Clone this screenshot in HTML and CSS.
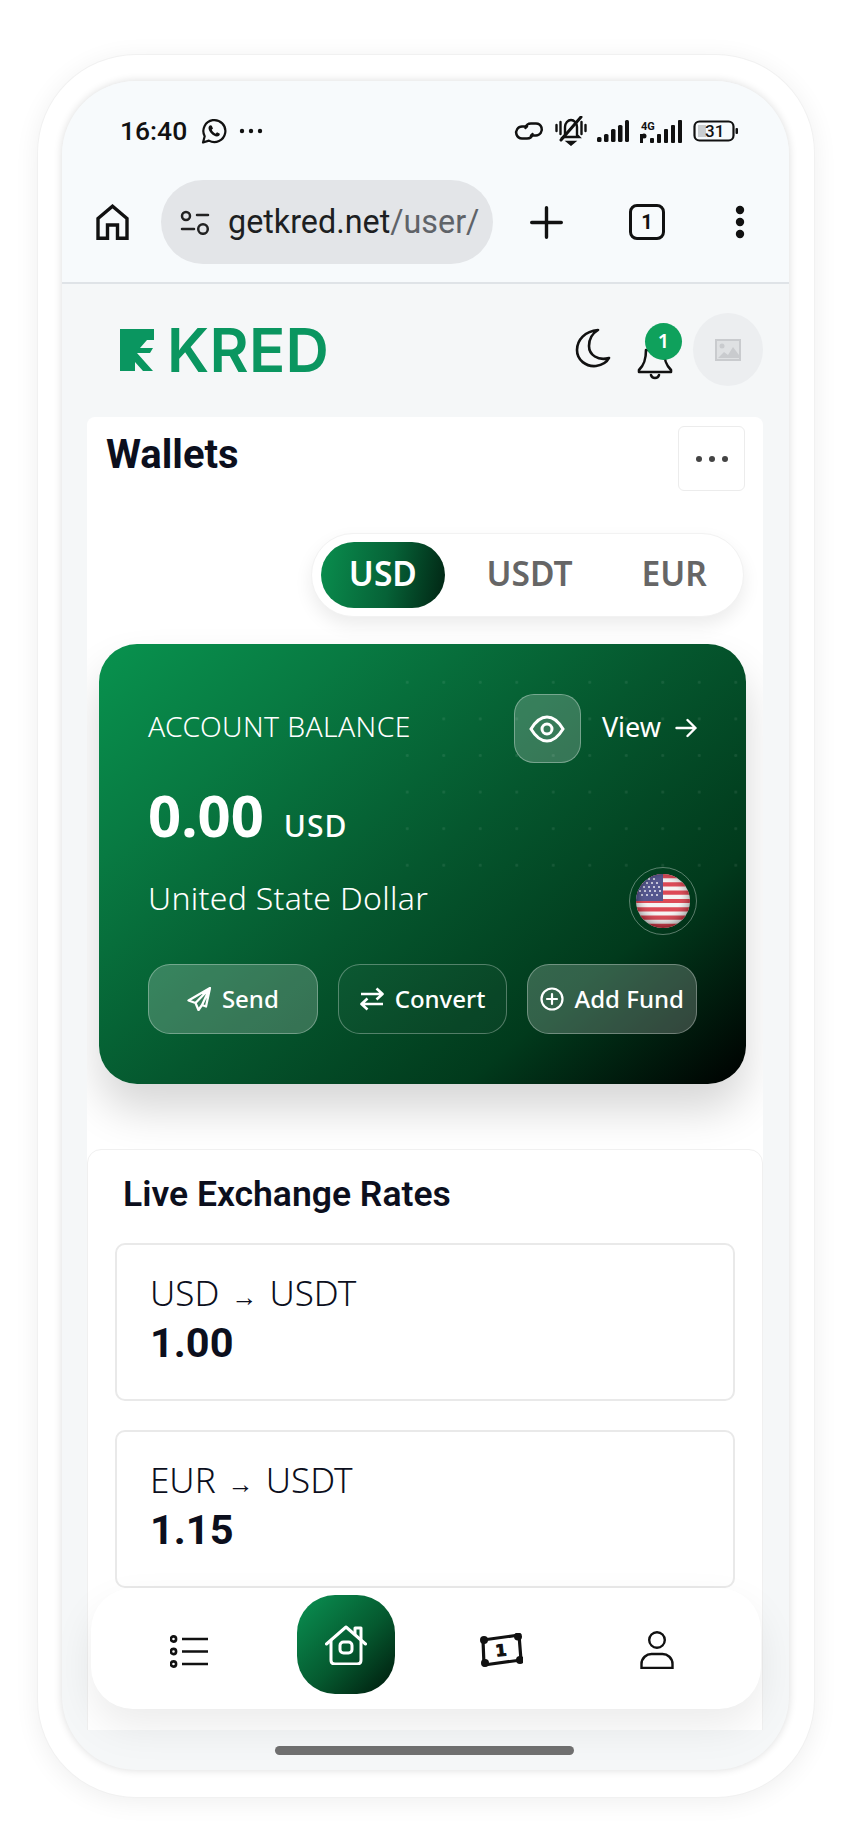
FILE: index.html
```html
<!DOCTYPE html>
<html lang="en">
<head>
<meta charset="utf-8">
<title>KRED Wallets</title>
<link rel="stylesheet" href="styles.css">
</head>
<body>
<div class="device">
  <div class="screen">
    <div class="status">
      <span class="time">16:40</span>
      <svg class="ic-wa" viewBox="0 0 26 26" fill="none" stroke="#111" stroke-width="2.2" stroke-linejoin="round"><path d="M2 24.500l1.700-6.200A11 11 0 1 1 7.900 22.600z"/><path fill="#111" stroke="none" d="M9.500 7.200c-.8 0-2 1.100-2 2.900 0 3.400 4.700 8.400 8.400 8.400 1.800 0 2.900-1.100 2.900-2.200 0-.5-.1-.8-.3-.9l-2.500-1.200-1.300 1.500c-1.700-.6-3.300-2.200-4-3.900l1.300-1.200-1.100-2.700c-.2-.4-.6-.6-1.400-.6z"/></svg>
      <svg class="ic-more" viewBox="0 0 24 6" fill="#111"><circle cx="3" cy="3" r="2.200"/><circle cx="12" cy="3" r="2.200"/><circle cx="21" cy="3" r="2.200"/></svg>
      <div class="status-right">
        <svg class="ic-link" viewBox="0 0 30 22" fill="none" stroke="#111" stroke-width="2.500" stroke-linecap="round"><path d="M13 6.500h-5a6 6 0 0 0-5.500 8 6 6 0 0 0 5.500 4h5c3 0 5-2 5.500-4.500"/><path d="M17 15.500h5a6 6 0 0 0 5.500-8 6 6 0 0 0-5.500-4h-5c-3 0-5 2-5.500 4.500"/></svg>
        <svg class="ic-mute" viewBox="0 0 32 30" fill="none" stroke="#111" stroke-width="2.400" stroke-linecap="round"><path d="M1.500 9v6M5.500 6v12M26.500 6v12M30.500 9v6"/><path d="M10 19V11c0-4 3-7 6-7s6 3 6 7v8l2 2H8z"/><path d="M13 26h6l-3 2.500z" fill="#111"/><path stroke-width="3" d="M26 1L6 24"/></svg>
        <svg class="ic-sig" viewBox="0 0 32 22" fill="#111"><rect x="0" y="17" width="4.500" height="5" rx="1.500"/><rect x="7" y="14" width="4.500" height="8" rx="1.500"/><rect x="14" y="9" width="4.500" height="13" rx="1.500"/><rect x="21" y="5" width="4.500" height="17" rx="1.500"/><rect x="28" y="0" width="4" height="22" rx="1.500"/></svg>
        <svg class="ic-4g" viewBox="0 0 43 23" fill="#111"><text class="mini-4g" x="1" y="10">4G</text><rect x="0" y="14" width="3" height="9"/><circle cx="4" cy="16" r="2.500"/><rect x="10" y="18" width="4" height="5" rx="1"/><rect x="17" y="14" width="4" height="9" rx="1"/><rect x="24" y="9" width="4" height="14" rx="1"/><rect x="31" y="5" width="4" height="18" rx="1"/><rect x="38" y="0" width="4" height="23" rx="1"/></svg>
        <svg class="ic-bat" viewBox="0 0 45 22" fill="none"><rect x="1.500" y="1.500" width="39" height="19" rx="5" stroke="#111" stroke-width="2.200"/><rect x="5" y="5" width="8" height="12" fill="#c9cdd0"/><rect x="42.500" y="8" width="2.500" height="6" rx="1" fill="#111"/><text class="bat-num" x="12" y="17">31</text></svg>
      </div>
    </div>

    <div class="toolbar">
      <svg class="ic-home" viewBox="0 0 33 36" fill="none" stroke="#111" stroke-width="3.400" stroke-linejoin="miter"><path d="M2 34.300V14.500L16.500 2.200 31 14.500v19.800H21.500V21h-10v13.300z"/></svg>
      <div class="url">
        <svg class="ic-tune" viewBox="0 0 30 25" fill="none" stroke="#222" stroke-width="2.500" stroke-linecap="round"><circle cx="6" cy="6" r="4"/><path d="M17 5h11M2 19h12"/><circle cx="23" cy="19" r="4.800"/></svg>
        <span class="url-text">getkred.net<span class="url-path">/user/</span></span>
      </div>
      <svg class="ic-plus" viewBox="0 0 33 33" stroke="#111" stroke-width="3.400" stroke-linecap="round"><path d="M16.500 1.700v29.600M1.700 16.500h29.600"/></svg>
      <div class="tabs">1</div>
      <svg class="ic-dots" viewBox="0 0 10 34" fill="#111"><circle cx="5" cy="5" r="4.200"/><circle cx="5" cy="17" r="4.200"/><circle cx="5" cy="29" r="4.200"/></svg>
    </div>

    <header class="head">
      <div class="brand">
        <svg class="logo-mark" viewBox="0 0 34 42" fill="#0a9660"><path d="M0 0h34v11h-7l-7 8h13l-3 5H17l16 18H23l-8-9v9H0z"/></svg>
        <span class="logo-text">KRED</span>
      </div>
      <div class="head-tools">
        <svg class="ic-moon" viewBox="0 0 36 40" fill="none" stroke="#111" stroke-width="2.600" stroke-linejoin="round"><path d="M23 2C10 3 2 12 2 22c0 10 9 17 19 16 6-1 11-4 13-8-11 3-20-3-20-12 0-7 4-13 9-16z"/></svg>
        <div class="bell-wrap">
          <svg class="ic-bell" viewBox="0 0 36 34" fill="none" stroke="#111" stroke-width="2.600" stroke-linejoin="round" stroke-linecap="round"><path d="M9 4C9 14 7 19 2 24v2h32v-2c-5-5-7-10-7-20z"/><path d="M14 29c1 4 7 4 8 0"/></svg>
          <span class="badge">1</span>
        </div>
        <div class="avatar">
          <svg class="ic-img" viewBox="0 0 26 22"><rect width="26" height="22" fill="#c9cbce"/><rect x="2" y="2" width="22" height="18" fill="#dfe1e3"/><circle cx="7" cy="7" r="2.500" fill="#c9cbce"/><path d="M3 19l6-6 4 3 5-8 6 8v3z" fill="#c9cbce"/></svg>
        </div>
      </div>
    </header>

    <main class="wallet">
      <div class="wallet-head">
        <h1 class="wallet-title">Wallets</h1>
        <button class="more-btn"><svg class="ic-more2" viewBox="0 0 32 6" fill="#444"><circle cx="3" cy="3" r="3"/><circle cx="16" cy="3" r="3"/><circle cx="29" cy="3" r="3"/></svg></button>
      </div>

      <div class="segment">
        <span class="seg seg-usd">USD</span>
        <span class="seg seg-usdt">USDT</span>
        <span class="seg seg-eur">EUR</span>
      </div>

      <section class="balance">
        <div class="bal-top">
          <span class="bal-label">ACCOUNT BALANCE</span>
          <span class="eye-btn"><svg class="ic-eye" viewBox="0 0 36 28" fill="none" stroke="#fff" stroke-width="3"><path d="M2 14C8 4 13 2 18 2s10 2 16 12c-6 10-11 12-16 12S8 24 2 14z"/><circle cx="18" cy="14" r="5"/></svg></span>
          <span class="view">View</span>
          <svg class="ic-arrow" viewBox="0 0 22 20" fill="none" stroke="#fff" stroke-width="2.400" stroke-linecap="round" stroke-linejoin="round"><path d="M1.500 10h19M12.500 2l8 8-8 8"/></svg>
        </div>
        <div class="bal-amount"><span class="amount">0.00</span><span class="amount-cur">USD</span></div>
        <div class="bal-name">
          <span class="cur-name">United State Dollar</span>
          <span class="flag-ring">
            <svg class="flag" viewBox="0 0 54 54">
              <defs>
                <clipPath id="fc"><circle cx="27" cy="27" r="27"/></clipPath>
                <radialGradient id="fs" cx="50%" cy="45%" r="55%"><stop offset="55%" stop-color="#fff" stop-opacity=".12"/><stop offset="100%" stop-color="#000" stop-opacity=".35"/></radialGradient>
              </defs>
              <g clip-path="url(#fc)">
                <rect width="54" height="54" fill="#f4f2f2"/>
                <path fill="#d8303f" d="M0 0h54v4.200H0zM0 8.300h54v4.200H0zM0 16.600h54v4.200H0zM0 24.900h54v4.200H0zM0 33.200h54v4.200H0zM0 41.500h54v4.200H0zM0 49.800h54V54H0z"/>
                <rect width="27" height="27" fill="#3c3f80"/>
                <g fill="#e8e8f2"><circle cx="6" cy="9" r="1"/><circle cx="11" cy="9" r="1"/><circle cx="16" cy="9" r="1"/><circle cx="21" cy="9" r="1"/><circle cx="8" cy="13" r="1"/><circle cx="13" cy="13" r="1"/><circle cx="18" cy="13" r="1"/><circle cx="23" cy="13" r="1"/><circle cx="4" cy="17" r="1"/><circle cx="9" cy="17" r="1"/><circle cx="14" cy="17" r="1"/><circle cx="19" cy="17" r="1"/><circle cx="24" cy="17" r="1"/><circle cx="6" cy="21" r="1"/><circle cx="11" cy="21" r="1"/><circle cx="16" cy="21" r="1"/><circle cx="21" cy="21" r="1"/><circle cx="13" cy="5" r="1"/><circle cx="18" cy="5" r="1"/></g>
                <rect width="54" height="54" fill="url(#fs)"/>
              </g>
            </svg>
          </span>
        </div>
        <div class="bal-actions">
          <button class="act act-strong"><svg class="ic-act" viewBox="0 0 24 24" fill="none" stroke="#fff" stroke-width="2.300" stroke-linejoin="round"><path d="M23 1L1.500 13.500l7 2.500 3 7 3.500-5 4 1.500zM23 1L8.500 16M23 1l-8 17"/></svg>Send</button>
          <button class="act act-faint"><svg class="ic-act" viewBox="0 0 24 24" fill="none" stroke="#fff" stroke-width="2.600" stroke-linejoin="round"><path d="M1 7h20M16.500 1.500L22.500 7l-6 5.500M23 17H3M7.500 11.500L1.500 17l6 5.500"/></svg>Convert</button>
          <button class="act act-strong act-tight"><svg class="ic-act ic-plus-c" viewBox="0 0 24 24" fill="none" stroke="#fff" stroke-width="2.200" stroke-linecap="round"><circle cx="12" cy="12" r="10.500"/><path d="M12 7v10M7 12h10"/></svg>Add Fund</button>
        </div>
      </section>

      <section class="rates">
        <h2 class="rates-title">Live Exchange Rates</h2>
        <div class="rate">
          <div class="rate-pair">USD <span class="rate-arrow">→</span> USDT</div>
          <div class="rate-val">1.00</div>
        </div>
        <div class="rate">
          <div class="rate-pair">EUR <span class="rate-arrow">→</span> USDT</div>
          <div class="rate-val">1.15</div>
        </div>
      </section>
    </main>

    <div class="home-bar"></div>

    <nav class="nav">
      <svg class="nav-list" viewBox="0 0 38 33" fill="none" stroke="#111"><g stroke-width="2.600"><circle cx="3.500" cy="4" r="2.600"/><circle cx="3.500" cy="16.500" r="2.600"/><circle cx="3.500" cy="29" r="2.600"/></g><path stroke-width="2.500" d="M12 4h26M12 16.500h26M12 29h26"/></svg>
      <div class="nav-active">
        <svg class="nav-home" viewBox="0 0 42 40" fill="none" stroke="#fff" stroke-width="3" stroke-linecap="round" stroke-linejoin="round"><path d="M1.500 19L21 2l19.500 17"/><path d="M30 9V3h6v11"/><path d="M6 16v19c0 2.500 1.500 4 4 4h22c2.500 0 4-1.500 4-4V16"/><rect x="15" y="17" width="12" height="11" rx="3.500"/></svg>
      </div>
      <svg class="nav-ticket" viewBox="0 0 44 34" fill="none" stroke="#111" stroke-linejoin="round"><path stroke-width="3.200" d="M4 7l36-5 2 25-37 5z"/><g fill="#111" stroke="none"><circle cx="5" cy="7" r="4"/><circle cx="39" cy="3.500" r="4"/><circle cx="41" cy="27" r="4"/><circle cx="6" cy="30" r="4"/></g><text class="ticket-num" x="22" y="23" transform="rotate(-6 22 17)">1</text></svg>
      <svg class="nav-user" viewBox="0 0 34 38" fill="none" stroke="#111" stroke-width="2.400"><circle cx="17" cy="9" r="7.800"/><path d="M1.500 37v-4c0-6 5-10 10-10h11c5 0 10 4 10 10v4z"/></svg>
    </nav>
  </div>
</div>
</body>
</html>
```

FILE: styles.css
```css
* { box-sizing: border-box; }
html, body { margin: 0; padding: 0; }
body {
  width: 853px;
  height: 1844px;
  overflow: hidden;
  background: #fff;
  padding: 55px 0 0 38px;
  font-family: "Noto Sans", sans-serif;
  color: #0c0f1d;
}
.device {
  width: 776px;
  height: 1742px;
  padding: 26px 25px 27px 24px;
  background: #fff;
  border-radius: 98px;
  box-shadow: 0 0 0 1px #f1f1f1, 0 4px 26px rgba(0, 0, 0, .07);
}
.screen {
  position: relative;
  width: 727px;
  height: 1689px;
  overflow: hidden;
  display: flex;
  flex-direction: column;
  background: #f5f7f8;
  border-radius: 74px;
  box-shadow: 0 0 8px rgba(0, 0, 0, .14);
}

/* status bar */
.status {
  flex: none;
  height: 100px;
  display: flex;
  align-items: center;
  padding: 0 51px 0 58px;
  background: #f7fafc;
}
.time { font: 500 26.500px/1 Roboto, sans-serif; color: #111; width: 66px; }
.ic-wa { width: 26px; height: 26px; margin-left: 15px; }
.ic-more { width: 24px; height: 6px; margin-left: 12px; }
.status-right { margin-left: auto; display: flex; align-items: center; }
.ic-link { width: 30px; height: 22px; }
.ic-mute { width: 32px; height: 30px; margin-left: 11px; }
.ic-sig { width: 32px; height: 22px; margin-left: 10px; }
.ic-4g { width: 43px; height: 23px; margin-left: 11px; }
.ic-bat { width: 45px; height: 22px; margin-left: 10px; }
.mini-4g { font: 700 11px Roboto, sans-serif; fill: #111; }
.bat-num { font: 500 17px Roboto, sans-serif; fill: #111; }

/* browser toolbar */
.toolbar {
  flex: none;
  height: 103px;
  display: flex;
  padding: 0 0 19px 34px;
  align-items: center;
  background: #f7fafc;
  border-bottom: 2px solid #dfe3e7;
}
.ic-home { width: 33px; height: 36px; flex: none; }
.url {
  flex: none;
  width: 332px;
  height: 84px;
  margin-left: 32px;
  padding-left: 19px;
  display: flex;
  align-items: center;
  background: #e3e5e8;
  border-radius: 42px;
}
.ic-tune { width: 30px; height: 25px; flex: none; }
.url-text { margin-left: 18px; font: 400 32.300px/1 Roboto, sans-serif; color: #1d1f22; white-space: nowrap; }
.url-path { color: #5f6368; }
.ic-plus { width: 33px; height: 33px; margin-left: 37px; flex: none; }
.tabs {
  flex: none;
  width: 36px;
  height: 36px;
  margin-left: 66px;
  display: flex;
  align-items: center;
  justify-content: center;
  border: 3.500px solid #111;
  border-radius: 8px;
  font: 700 20px/1 Roboto, sans-serif;
  color: #111;
}
.ic-dots { width: 10px; height: 34px; margin-left: 70px; flex: none; }

/* app header */
.head {
  flex: none;
  height: 133px;
  display: flex;
  align-items: center;
  justify-content: space-between;
  padding: 0 26px 2px 58px;
}
.brand { display: flex; align-items: center; }
.logo-mark { width: 34px; height: 42px; }
.logo-text { margin-left: 13px; font: 600 60px/1 Inter, sans-serif; color: #0a9660; letter-spacing: .3px; }
.head-tools { display: flex; align-items: center; }
.ic-moon { width: 36px; height: 40px; margin-bottom: 4px; }
.bell-wrap { position: relative; width: 36px; height: 34px; margin: 26px 0 0 26px; }
.ic-bell { display: block; width: 36px; height: 34px; }
.badge {
  position: absolute;
  left: 8px;
  top: -23px;
  width: 37px;
  height: 37px;
  display: flex;
  align-items: center;
  justify-content: center;
  border-radius: 50%;
  background: #0fa15c;
  color: #fff;
  font: 600 20px/1 "Noto Sans", sans-serif;
}
.avatar {
  width: 70px;
  height: 73px;
  margin-left: 20px;
  display: flex;
  align-items: center;
  justify-content: center;
  border-radius: 50%;
  background: #eceef0;
}
.ic-img { width: 26px; height: 22px; }

/* wallet card */
.wallet {
  flex: none;
  height: 1313px;
  margin: 0 26px 0 25px;
  background: #fff;
  border-radius: 8px 8px 0 0;
  overflow: hidden;
}
.wallet-head {
  display: flex;
  justify-content: space-between;
  padding: 9px 18px 0 19px;
  height: 74px;
}
.wallet-title { margin: 9px 0 0; font: 700 40px/1 Roboto, sans-serif; color: #0c0f1d; }
.more-btn {
  width: 67px;
  height: 65px;
  padding: 0;
  display: flex;
  align-items: center;
  justify-content: center;
  background: #fff;
  border: 1px solid #ececec;
  border-radius: 6px;
}
.ic-more2 { width: 32px; height: 6px; }

.segment {
  width: 433px;
  height: 84px;
  margin: 42px 19px 0 auto;
  padding: 10px 9px;
  display: flex;
  align-items: center;
  background: #fff;
  border: 1px solid #f2f2f2;
  border-radius: 42px;
  box-shadow: 0 8px 18px rgba(0, 0, 0, .08);
  font: 600 33.500px/1 "Noto Sans", sans-serif;
  color: #666;
}
.seg { display: flex; align-items: center; justify-content: center; height: 66px; padding-bottom: 3px; }
.seg-usd {
  width: 124px;
  color: #fff;
  border-radius: 33px;
  background: linear-gradient(100deg, #0a8e4e 0%, #066237 55%, #012413 100%);
}
.seg-usdt { width: 170px; }
.seg-eur { width: 120px; }

/* balance card */
.balance {
  position: relative;
  width: 647px;
  height: 440px;
  margin: 27px 0 0 12px;
  padding: 50px 49px 0;
  border-radius: 38px;
  color: #fff;
  background: linear-gradient(140deg, #08924e 0%, #087a42 22%, #05572e 50%, #013a1c 76%, #000 100%);
  box-shadow: 0 26px 44px rgba(0, 0, 0, .16);
}
.balance::before {
  content: "";
  position: absolute;
  inset: 20px 0 210px 290px;
  background: radial-gradient(circle, rgba(255, 255, 255, .08) 1.200px, transparent 1.800px) 0 0 / 36.500px 36.600px;
  pointer-events: none;
}
.bal-top { position: relative; display: flex; align-items: center; height: 69px; }
.bal-label { font-size: 28.300px; line-height: 64px; height: 69px; font-weight: 300; width: 366px; white-space: nowrap; letter-spacing: .4px; }
.eye-btn {
  flex: none;
  width: 67px;
  height: 69px;
  display: flex;
  align-items: center;
  justify-content: center;
  border: 1px solid rgba(255, 255, 255, .32);
  border-radius: 20px;
  background: rgba(255, 255, 255, .2);
}
.ic-eye { width: 36px; height: 28px; }
.view { margin-left: 21px; font-size: 27px; line-height: 65px; height: 69px; }
.ic-arrow { width: 22px; height: 20px; margin: 0 0 2px 14px; }
.bal-amount { position: relative; display: flex; align-items: baseline; height: 60px; margin-top: 22px; }
.amount { font-size: 58px; line-height: 60px; font-weight: 700; }
.amount-cur { margin-left: 20px; font-size: 30px; font-weight: 500; letter-spacing: 1px; }
.bal-name { position: relative; display: flex; align-items: center; justify-content: space-between; height: 68px; margin-top: 22px; }
.cur-name { font-size: 32px; font-weight: 300; padding-bottom: 8px; letter-spacing: .3px; }
.flag-ring {
  width: 68px;
  height: 68px;
  display: flex;
  align-items: center;
  justify-content: center;
  border: 1px solid rgba(255, 255, 255, .35);
  border-radius: 50%;
}
.flag { width: 54px; height: 54px; }
.bal-actions { position: relative; display: flex; gap: 20px; margin-top: 29px; }
.act {
  flex: 1;
  height: 70px;
  padding: 0;
  display: flex;
  align-items: center;
  justify-content: center;
  gap: 11px;
  border: 1px solid rgba(255, 255, 255, .3);
  border-radius: 22px;
  color: #fff;
  font: 500 24px/1 "Noto Sans", sans-serif;
  white-space: nowrap;
}
.act-strong { background: rgba(255, 255, 255, .2); }
.act-faint { background: rgba(255, 255, 255, .03); }
.act-tight { gap: 10px; }
.ic-act { width: 24px; height: 24px; flex: none; }

/* rates */
.rates {
  position: relative;
  margin-top: 65px;
  padding: 0 27px;
  height: 600px;
  background: #fff;
  border: 1px solid #f0f0f0;
  border-radius: 14px 14px 0 0;
}
.rates-title { margin: 0; padding: 25px 0 0 8px; height: 93px; font: 600 35.500px/1.100 Roboto, sans-serif; color: #0c0f1d; }
.rate {
  height: 158px;
  margin-bottom: 29px;
  padding: 28px 33px 0;
  border: 2px solid #e9e9e9;
  border-radius: 10px;
}
.rate-pair { font-size: 35px; line-height: 40px; font-weight: 300; color: #0c0f1d; white-space: nowrap; }
.rate-arrow { font-size: 26px; margin: 0 3px; }
.rate-val { margin-top: 3px; font: 700 41.500px/48px Roboto, sans-serif; color: #0c0f1d; }

.home-bar { flex: none; width: 299px; height: 9px; margin: 16px 0 0 213px; border-radius: 5px; background: #707070; }

/* bottom nav */
.nav {
  position: absolute;
  left: 29px;
  top: 1507px;
  width: 670px;
  height: 121px;
  display: grid;
  grid-template-columns: repeat(4, 156px);
  padding-left: 20px;
  align-items: center;
  justify-items: center;
  background: #fff;
  border-radius: 42px;
  box-shadow: 0 18px 40px rgba(0, 0, 0, .08);
}
.nav-list { width: 38px; height: 33px; margin-top: 6px; }
.nav-active {
  width: 98px;
  height: 99px;
  margin: 0 0 8px 2px;
  display: flex;
  align-items: center;
  justify-content: center;
  border-radius: 38px;
  background: linear-gradient(135deg, #0a9253 0%, #05592f 55%, #00180b 100%);
}
.nav-home { width: 42px; height: 40px; }
.nav-ticket { width: 44px; height: 34px; margin-top: 3px; }
.ticket-num { font: 900 16px "DejaVu Sans", sans-serif; fill: #111; text-anchor: middle; }
.nav-user { width: 34px; height: 38px; margin-top: 3px; }
```
